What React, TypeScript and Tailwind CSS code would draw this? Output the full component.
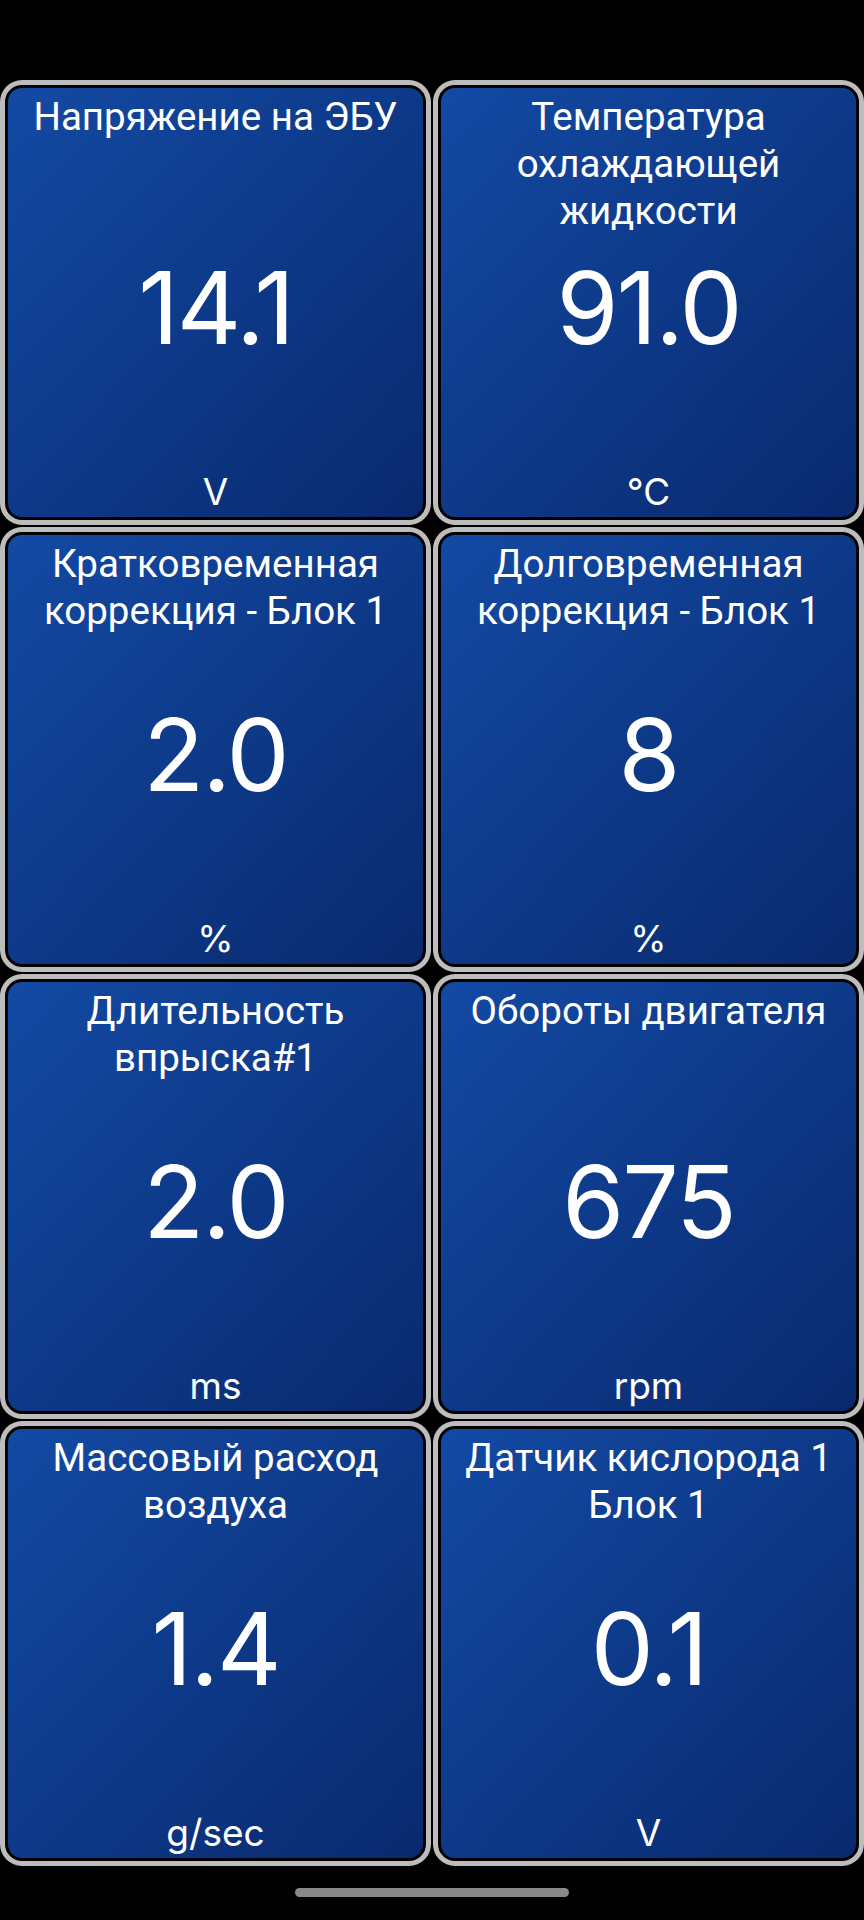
const CARDS = [
  { title: ["Напряжение на ЭБУ"], value: "14.1", unit: "V" },
  { title: ["Температура", "охлаждающей", "жидкости"], value: "91.0", unit: "℃" },
  { title: ["Кратковременная", "коррекция - Блок 1"], value: "2.0", unit: "%" },
  { title: ["Долговременная", "коррекция - Блок 1"], value: "8", unit: "%" },
  { title: ["Длительность", "впрыска#1"], value: "2.0", unit: "ms" },
  { title: ["Обороты двигателя"], value: "675", unit: "rpm" },
  { title: ["Массовый расход", "воздуха"], value: "1.4", unit: "g/sec" },
  { title: ["Датчик кислорода 1", "Блок 1"], value: "0.1", unit: "V" },
];

function Gauge({ title, value, unit }: { title: string[]; value: string; unit: string }) {
  return (
    <div className="h-[445px] rounded-[22px] bg-[#bdbdbd] p-[5px]">
      <div className="grid h-full grid-rows-[1fr_auto_1fr] rounded-[17px] border-[3px] border-black bg-gradient-to-br from-[#134aa4] to-[#09296e] px-2 pt-[5px] pb-[3px] text-center text-white">
        <div className="font-['Roboto',sans-serif] text-[38.5px] leading-[47px]">
          {title.map((line) => (
            <div key={line}>{line}</div>
          ))}
        </div>
        <div className="mt-[8px] font-['Inter',sans-serif] text-[100px] leading-none tracking-[-2px]">
          {value}
        </div>
        <div className="self-end font-['Inter',sans-serif] text-[37px] leading-[44px]">
          {unit}
        </div>
      </div>
    </div>
  );
}

export default function App() {
  return (
    <div className="flex min-h-screen w-full flex-col bg-black pt-20">
      <div className="grid grid-cols-2 gap-[2px]">
        {CARDS.map((card) => (
          <Gauge key={card.value + card.unit + card.title[0]} {...card} />
        ))}
      </div>
      <div className="flex justify-center pt-[22px] pb-[23px]">
        <span className="h-[9px] w-[274px] rounded-full bg-[#8a8a8a]" />
      </div>
    </div>
  );
}
